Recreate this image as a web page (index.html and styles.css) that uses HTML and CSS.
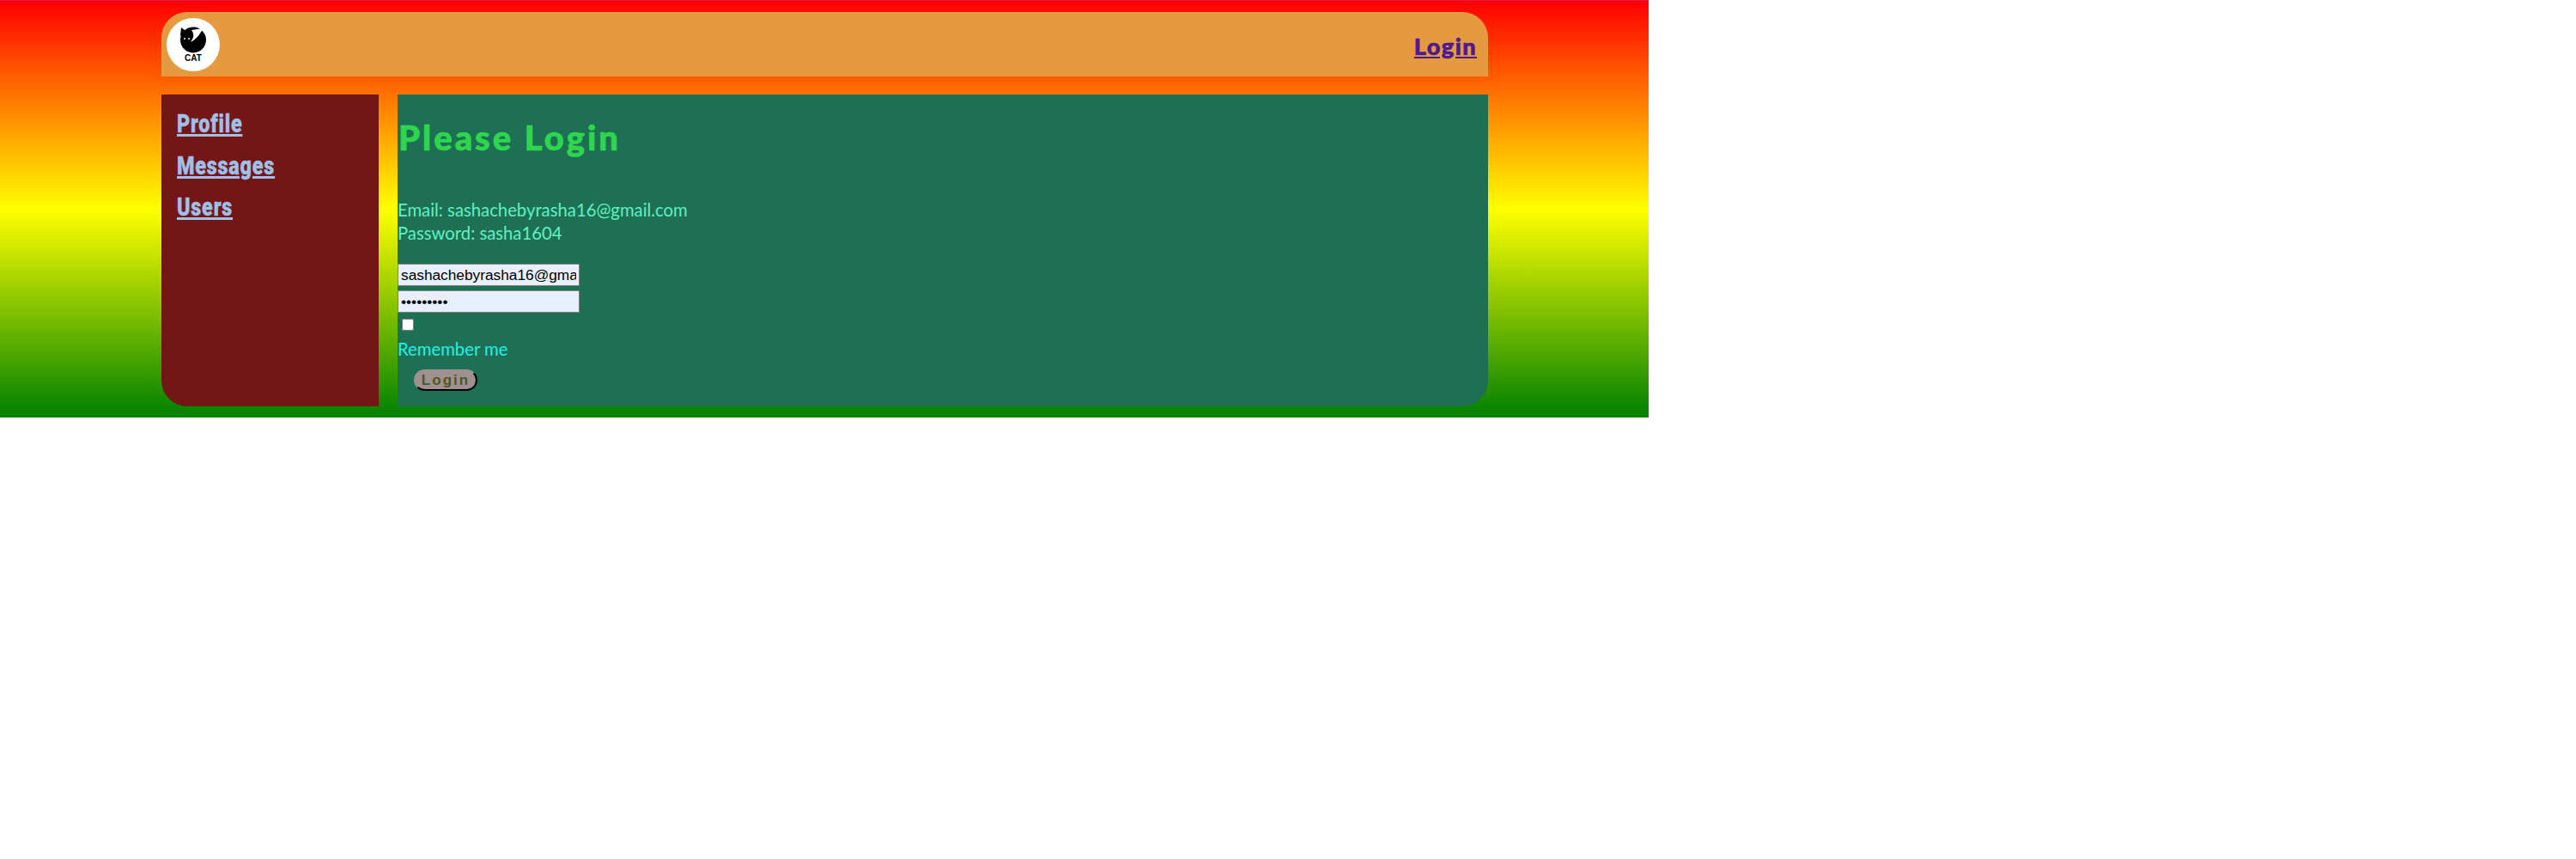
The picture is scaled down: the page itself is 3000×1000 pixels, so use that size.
FILE: index.html
```html
<!DOCTYPE html>
<html lang="en">
<head>
  <meta charset="UTF-8">
  <title>Please Login</title>
  <link rel="stylesheet" href="styles.css">
</head>
<body>
  <div class="page">
    <header class="topbar">
      <a class="logo" href="#">
        <svg width="62" height="62" viewBox="0 0 62 62">
          <circle cx="31" cy="31" r="31" fill="#fff"/>
          <circle cx="31" cy="25.500" r="15" fill="#000"/>
          <path d="M16 20 L17 11 L21 14 L27 14 L33 10.500 L36 12 L31 16 L20 24 Z" fill="#000"/>
          <path d="M29 14 Q36 13 42 12 Q44 13 40 16 Q36 24 28 28 Q34 20 29 14 Z" fill="#fff"/>
          <circle cx="21" cy="24" r="1" fill="#fff"/>
          <circle cx="26" cy="24" r="1" fill="#fff"/>
          <text x="31" y="50" text-anchor="middle" class="logo-text">CAT</text>
        </svg>
      </a>
      <a class="login-link" href="#">Login</a>
    </header>
    <div class="columns">
      <nav class="sidebar">
        <a href="#">Profile</a>
        <a href="#">Messages</a>
        <a href="#">Users</a>
      </nav>
      <main class="content">
        <h1>Please Login</h1>
        <p class="creds">Email: sashachebyrasha16@gmail.com<br>Password: sasha1604</p>
        <form class="login-form">
          <input class="autofilled" type="text" value="sashachebyrasha16@gmail.com">
          <input class="autofilled pass" type="password" value="sasha1604">
          <input class="remember" type="checkbox" id="remember">
          <label for="remember">Remember me</label>
          <button type="button">Login</button>
        </form>
      </main>
    </div>
  </div>
</body>
</html>
```

FILE: styles.css
```css
body {
  margin: 0;
  background-color: #fff;
}

.page {
  width: 1920px;
  height: 486px;
  box-sizing: border-box;
  padding: 13px 187px 13px 188px;
  display: flex;
  flex-direction: column;
  gap: 21px;
  background: linear-gradient(to bottom, #f00 0%, #ff0 50%, #008000 100%);
  border-top: 1px solid #d81b50;
}

.topbar {
  height: 75px;
  flex: none;
  display: flex;
  align-items: center;
  justify-content: space-between;
  padding: 0 13px 0 6px;
  background-color: #e59a3f;
  border-radius: 30px 30px 0 0;
}

.logo {
  display: block;
  width: 62px;
  height: 62px;
}

.logo-text {
  font-family: "Liberation Sans", sans-serif;
  font-size: 10px;
  font-weight: bold;
}

.login-link {
  margin-top: 3px;
  font-family: Lato, sans-serif;
  font-size: 27px;
  font-weight: 900;
  letter-spacing: 1.500px;
  color: #4f1a8c;
  -webkit-text-stroke: 0.7px #4f1a8c;
}

.columns {
  flex: 1;
  display: flex;
  gap: 22px;
}

.sidebar {
  width: 253px;
  flex: none;
  box-sizing: border-box;
  padding: 16px 0 0 18px;
  display: flex;
  flex-direction: column;
  align-items: flex-start;
  gap: 12.500px;
  background-color: #721616;
  border-radius: 0 0 0 30px;
}

.sidebar a {
  font-family: Roboto, sans-serif;
  font-size: 30px;
  line-height: 36px;
  font-weight: 900;
  letter-spacing: 1px;
  color: #a0c0e8;
  -webkit-text-stroke: 0.4px #a0c0e8;
  transform: scaleX(0.78);
  transform-origin: left;
}

.content {
  flex: 1;
  background-color: #1e7055;
  border-radius: 0 0 30px 0;
  font-family: Lato, sans-serif;
}

h1 {
  margin: 26px 0 0 1px;
  font-family: Lato, sans-serif;
  font-size: 40px;
  line-height: 48px;
  font-weight: 900;
  letter-spacing: 3px;
  color: #2ed64e;
  -webkit-text-stroke: 0.7px #2ed64e;
}

.creds {
  margin: 47px 0 0;
  font-size: 20.300px;
  line-height: 27px;
  color: #5ff0c0;
}

.login-form {
  margin-top: 22px;
  display: flex;
  flex-direction: column;
  align-items: flex-start;
}

.autofilled {
  width: 212px;
  height: 26px;
  box-sizing: border-box;
  margin: 0 0 5px;
  padding: 0 3px;
  border: 1px solid #808080;
  background-color: #e8f0fe;
  font-family: "Liberation Sans", sans-serif;
  font-size: 17.300px;
  color: #000;
}

.pass {
  margin-bottom: 6px;
}

.remember {
  width: 14px;
  height: 14px;
  margin: 1px 0 0 5px;
}

label {
  margin-top: 7px;
  font-size: 20.300px;
  line-height: 28px;
  color: #1ff0e4;
}

button {
  margin: 10px 0 0 19px;
  width: 74px;
  height: 25px;
  padding: 0;
  border: 2px solid #000;
  border-top-color: #a09090;
  border-left-color: #a09090;
  border-radius: 13px;
  background-color: #a09090;
  font-family: "Liberation Sans", sans-serif;
  font-size: 17px;
  font-weight: bold;
  letter-spacing: 2px;
  color: #4a5a20;
}
```
